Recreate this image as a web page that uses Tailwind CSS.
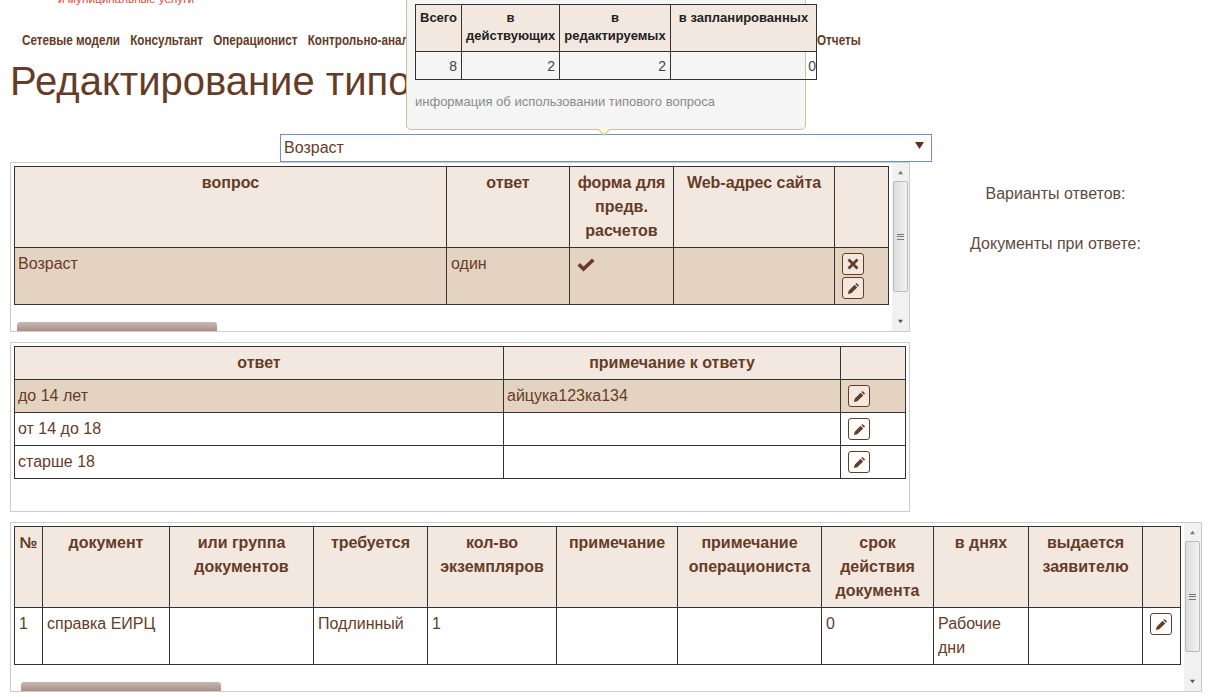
<!DOCTYPE html>
<html lang="ru">
<head>
  <meta charset="UTF-8">
  <title>Редактирование типового вопроса</title>
  <script src="https://cdn.jsdelivr.net/npm/@tailwindcss/browser@4"></script>
</head>
<body class="bg-white text-[#663c26] font-['Liberation_Sans',Arial,sans-serif] text-[16px] leading-6">
<div class="relative h-[697px] w-[1211px] overflow-hidden">

  <!-- Header -->
  <div class="h-[28px] overflow-hidden pl-[58px]">
    <div class="-mt-[9px] text-[11.75px] leading-4 text-[#e8473a]">и муниципальные услуги</div>
  </div>
  <nav class="ml-[22px] flex h-[24px] w-max origin-left scale-x-[0.78] gap-[13px] text-[15px] font-bold leading-6 whitespace-nowrap">
    <a>Сетевые модели</a>
    <a>Консультант</a>
    <a>Операционист</a>
    <a class="w-[640px] overflow-hidden">Контрольно-аналитическая подсистема</a>
    <a>Отчеты</a>
  </nav>
  <h1 class="h-[58px] pl-[10px] text-[40px] leading-[58px] font-normal whitespace-nowrap">Редактирование типового вопроса</h1>

  <!-- Popover -->
  <div class="absolute left-[406px] top-[-10px] h-[140px] w-[400px] rounded-[5px] border border-[#c9c19f] bg-[#f5f5f5]">
    <table class="mt-[13px] ml-[8px] w-[401px] table-fixed border-collapse text-[13px] leading-[18px] text-[#222]">
      <colgroup><col class="w-[46px]"><col class="w-[98px]"><col class="w-[111px]"><col class="w-[146px]"></colgroup>
      <tr class="h-[47px] bg-[#f2e8e0] align-top font-bold">
        <th class="border border-[#333] px-1 pt-[4px]">Всего</th>
        <th class="border border-[#333] px-1 pt-[4px]">в действующих</th>
        <th class="border border-[#333] px-1 pt-[4px]">в редактируемых</th>
        <th class="border border-[#333] px-1 pt-[4px]">в запланированных</th>
      </tr>
      <tr class="h-[28px] text-right text-[14px] text-[#444]">
        <td class="border border-[#333] pr-[4px]">8</td>
        <td class="border border-[#333] pr-[4px]">2</td>
        <td class="border border-[#333] pr-[4px]">2</td>
        <td class="border border-[#333]">0</td>
      </tr>
    </table>
    <p class="mt-[13px] ml-[8px] text-[13px] leading-[18px] text-[#8a8a8a]">информация об использовании типового вопроса</p>
    <span class="absolute bottom-[-5px] left-[193px] size-[8px] rotate-45 border-r border-b border-[#c9c19f] bg-[#fbf8e0]"></span>
  </div>

  <!-- Select -->
  <div class="mt-[24px] ml-[280px] flex h-[28px] w-[652px] items-center justify-between border border-[#6f8fd0] pr-[7px] pl-[3px]">
    <span>Возраст</span>
    <svg class="-mt-[5px] size-[9px] text-[#5a3420]" viewBox="0 0 10 10" fill="currentColor"><path d="M0 1h10L5 9z"/></svg>
  </div>

  <div class="flex">
    <!-- Question -->
    <div class="relative ml-[10px] flex h-[170px] w-[900px] border border-[#ccc] pt-[3px] pl-[3px]">
      <table class="h-[139px] w-[874px] table-fixed border-collapse self-start">
        <colgroup><col class="w-[432px]"><col class="w-[123px]"><col class="w-[104px]"><col class="w-[161px]"><col class="w-[54px]"></colgroup>
        <tr class="h-[81px] bg-[#f2e8e0] align-top font-bold">
          <th class="border border-[#333] px-1 pt-[4px]">вопрос</th>
          <th class="border border-[#333] px-1 pt-[4px]">ответ</th>
          <th class="border border-[#333] px-1 pt-[4px]">форма для предв. расчетов</th>
          <th class="border border-[#333] px-1 pt-[4px]">Web-адрес сайта</th>
          <th class="border border-[#333]"></th>
        </tr>
        <tr class="bg-[#e5d3c2] align-top">
          <td class="border border-[#333] px-[3px] pt-[4px]">Возраст</td>
          <td class="border border-[#333] px-[4px] pt-[4px]">один</td>
          <td class="border border-[#333] pt-[8px] pl-[7px]">
            <svg class="size-[18px]" viewBox="0 0 18 14" fill="currentColor"><path d="M0.5 7.5L3 5l3.5 3.5L15 0.5 17.5 3 6.5 13.5z"/></svg>
          </td>
          <td class="border border-[#333]"></td>
          <td class="border border-[#333] pt-[5px] pl-[7px]">
            <button class="mb-[2px] flex size-[22px] items-center justify-center rounded-[3px] border border-[#663c26] bg-[#f2e8e0]">
              <svg class="size-[12px]" viewBox="0 0 12 12" stroke="currentColor" stroke-width="2.8"><path d="M1.5 1.5l9 9M10.5 1.5l-9 9"/></svg>
            </button>
            <button class="flex size-[22px] items-center justify-center rounded-[3px] border border-[#663c26] bg-[#f2e8e0]">
              <svg class="size-[13px]" viewBox="0 0 14 14" fill="currentColor"><path d="M10.2 1L13 3.8 11.8 5 9 2.2zM8.2 3L11 5.8 4.6 12.2 1 13l.8-3.6z"/></svg>
            </button>
          </td>
        </tr>
      </table>
      <!-- Scrollbars -->
      <div class="absolute bottom-0 left-[6px] h-[9px] w-[200px] rounded-t-[3px] bg-gradient-to-b from-[#c9b9b1] to-[#a98f85]"></div>
      <div class="absolute top-0 right-0 flex h-[168px] w-[17px] flex-col items-center bg-[#f1f1f1]">
        <svg class="mt-[7px] mb-[6px] size-[5px] text-[#777]" viewBox="0 0 6 6" fill="currentColor"><path d="M0 5h6L3 1z"/></svg>
        <div class="flex h-[111px] w-[15px] items-center justify-center rounded-[2px] border border-[#bbb] bg-gradient-to-r from-[#dcdcdc] to-[#f2f2f2]">
          <div class="h-[6px] w-[7px] border-y border-[#777] bg-[linear-gradient(#777,#777)] bg-[length:100%_1px] bg-center bg-no-repeat"></div>
        </div>
        <svg class="mt-auto mb-[7px] size-[5px] text-[#555]" viewBox="0 0 6 6" fill="currentColor"><path d="M0 1h6L3 5z"/></svg>
      </div>
    </div>

    <!-- Side labels -->
    <div class="w-[291px] pt-[19px] text-center leading-[26px] text-[#5f4a3e]">
      <p class="mb-[24px]">Варианты ответов:</p>
      <p>Документы при ответе:</p>
    </div>
  </div>

  <!-- Answers -->
  <div class="mt-[10px] ml-[10px] h-[170px] w-[900px] border border-[#ccc] pt-[3px] pl-[3px]">
    <table class="w-[891px] table-fixed border-collapse">
      <colgroup><col class="w-[489px]"><col class="w-[337px]"><col class="w-[65px]"></colgroup>
      <tr class="h-[33px] bg-[#f2e8e0] font-bold">
        <th class="border border-[#333]">ответ</th>
        <th class="border border-[#333]">примечание к ответу</th>
        <th class="border border-[#333]"></th>
      </tr>
      <tr class="h-[33px] bg-[#e5d3c2]">
        <td class="border border-[#333] px-[3px]">до 14 лет</td>
        <td class="border border-[#333] px-[3px]">айцука123ка134</td>
        <td class="border border-[#333] pl-[7px]">
          <button class="flex size-[22px] items-center justify-center rounded-[3px] border border-[#663c26] bg-[#f2e8e0]">
            <svg class="size-[13px]" viewBox="0 0 14 14" fill="currentColor"><path d="M10.2 1L13 3.8 11.8 5 9 2.2zM8.2 3L11 5.8 4.6 12.2 1 13l.8-3.6z"/></svg>
          </button>
        </td>
      </tr>
      <tr class="h-[33px]">
        <td class="border border-[#333] px-[3px]">от 14 до 18</td>
        <td class="border border-[#333] px-[3px]"></td>
        <td class="border border-[#333] pl-[7px]">
          <button class="flex size-[22px] items-center justify-center rounded-[3px] border border-[#663c26] bg-white">
            <svg class="size-[13px]" viewBox="0 0 14 14" fill="currentColor"><path d="M10.2 1L13 3.8 11.8 5 9 2.2zM8.2 3L11 5.8 4.6 12.2 1 13l.8-3.6z"/></svg>
          </button>
        </td>
      </tr>
      <tr class="h-[33px]">
        <td class="border border-[#333] px-[3px]">старше 18</td>
        <td class="border border-[#333] px-[3px]"></td>
        <td class="border border-[#333] pl-[7px]">
          <button class="flex size-[22px] items-center justify-center rounded-[3px] border border-[#663c26] bg-white">
            <svg class="size-[13px]" viewBox="0 0 14 14" fill="currentColor"><path d="M10.2 1L13 3.8 11.8 5 9 2.2zM8.2 3L11 5.8 4.6 12.2 1 13l.8-3.6z"/></svg>
          </button>
        </td>
      </tr>
    </table>
  </div>

  <!-- Documents -->
  <div class="relative mt-[10px] ml-[10px] h-[170px] w-[1192px] border border-[#ccc] pt-[3px] pl-[3px]">
    <table class="h-[139px] w-[1166px] table-fixed border-collapse">
      <colgroup><col class="w-[28px]"><col class="w-[127px]"><col class="w-[144px]"><col class="w-[114px]"><col class="w-[129px]"><col class="w-[121px]"><col class="w-[144px]"><col class="w-[112px]"><col class="w-[95px]"><col class="w-[114px]"><col class="w-[38px]"></colgroup>
      <tr class="h-[81px] bg-[#f2e8e0] align-top font-bold">
        <th class="border border-[#333] pt-[4px]">№</th>
        <th class="border border-[#333] px-1 pt-[4px]">документ</th>
        <th class="border border-[#333] px-1 pt-[4px]">или группа документов</th>
        <th class="border border-[#333] px-1 pt-[4px]">требуется</th>
        <th class="border border-[#333] px-1 pt-[4px]">кол-во экземпляров</th>
        <th class="border border-[#333] px-1 pt-[4px]">примечание</th>
        <th class="border border-[#333] px-1 pt-[4px]">примечание операциониста</th>
        <th class="border border-[#333] px-1 pt-[4px]">срок действия документа</th>
        <th class="border border-[#333] px-1 pt-[4px]">в днях</th>
        <th class="border border-[#333] px-1 pt-[4px]">выдается заявителю</th>
        <th class="border border-[#333]"></th>
      </tr>
      <tr class="align-top">
        <td class="border border-[#333] px-[4px] pt-[4px]">1</td>
        <td class="border border-[#333] px-[4px] pt-[4px]">справка ЕИРЦ</td>
        <td class="border border-[#333] px-[4px] pt-[4px]"></td>
        <td class="border border-[#333] px-[4px] pt-[4px]">Подлинный</td>
        <td class="border border-[#333] px-[4px] pt-[4px]">1</td>
        <td class="border border-[#333] px-[4px] pt-[4px]"></td>
        <td class="border border-[#333] px-[4px] pt-[4px]"></td>
        <td class="border border-[#333] px-[4px] pt-[4px]">0</td>
        <td class="border border-[#333] px-[4px] pt-[4px]">Рабочие дни</td>
        <td class="border border-[#333] px-[4px] pt-[4px]"></td>
        <td class="border border-[#333] pt-[5px] pl-[7px]">
          <button class="flex size-[22px] items-center justify-center rounded-[3px] border border-[#663c26] bg-white">
            <svg class="size-[13px]" viewBox="0 0 14 14" fill="currentColor"><path d="M10.2 1L13 3.8 11.8 5 9 2.2zM8.2 3L11 5.8 4.6 12.2 1 13l.8-3.6z"/></svg>
          </button>
        </td>
      </tr>
    </table>
    <div class="absolute bottom-0 left-[10px] h-[9px] w-[200px] rounded-t-[3px] bg-gradient-to-b from-[#c9b9b1] to-[#a98f85]"></div>
    <div class="absolute top-0 right-0 flex h-[168px] w-[17px] flex-col items-center bg-[#f1f1f1]">
      <svg class="mt-[7px] mb-[6px] size-[5px] text-[#777]" viewBox="0 0 6 6" fill="currentColor"><path d="M0 5h6L3 1z"/></svg>
      <div class="flex h-[111px] w-[15px] items-center justify-center rounded-[2px] border border-[#bbb] bg-gradient-to-r from-[#dcdcdc] to-[#f2f2f2]">
        <div class="h-[6px] w-[7px] border-y border-[#777] bg-[linear-gradient(#777,#777)] bg-[length:100%_1px] bg-center bg-no-repeat"></div>
      </div>
      <svg class="mt-auto mb-[7px] size-[5px] text-[#555]" viewBox="0 0 6 6" fill="currentColor"><path d="M0 1h6L3 5z"/></svg>
    </div>
  </div>
</div>
</body>
</html>
